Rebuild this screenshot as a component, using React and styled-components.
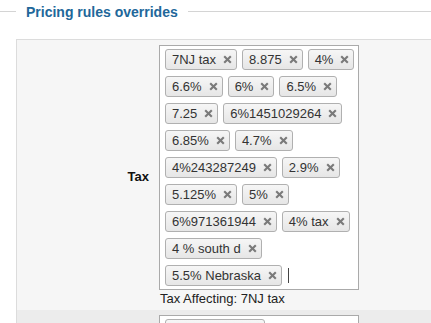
import React from "react";
import styled, { createGlobalStyle } from "styled-components";

const GlobalStyle = createGlobalStyle`
  body {
    margin: 0;
    background: #fff;
    font-family: "Liberation Sans", Arial, sans-serif;
  }
`;

const taxes = [
  "7NJ tax",
  "8.875",
  "4%",
  "6.6%",
  "6%",
  "6.5%",
  "7.25",
  "6%1451029264",
  "6.85%",
  "4.7%",
  "4%243287249",
  "2.9%",
  "5.125%",
  "5%",
  "6%971361944",
  "4% tax",
  "4 % south d",
  "5.5% Nebraska",
];

export default function App() {
  return (
    <>
      <GlobalStyle />
      <Section>
        <LegendRow>
          <Rule $w="16px" />
          <Legend>Pricing rules overrides</Legend>
          <Rule />
        </LegendRow>
        <Panel>
          <Row>
            <Label>Tax</Label>
            <Field>
              <ChoiceBox>
                {taxes.map((t) => (
                  <Tag key={t}>
                    {t}
                    <CloseIcon />
                  </Tag>
                ))}
                <Caret />
              </ChoiceBox>
              <Hint>Tax Affecting: 7NJ tax</Hint>
            </Field>
          </Row>
          <Row $alt>
            <Label />
            <Field>
              <ChoiceBox>
                <Tag $blank />
              </ChoiceBox>
            </Field>
          </Row>
        </Panel>
      </Section>
    </>
  );
}

function CloseIcon() {
  return (
    <svg width="9" height="9" viewBox="0 0 9 9">
      <path
        d="M1.2 1.2 L7.8 7.8 M7.8 1.2 L1.2 7.8"
        stroke="#7a7a7a"
        strokeWidth="2.1"
      />
    </svg>
  );
}

const Section = styled.div`
  width: 100%;
`;

const LegendRow = styled.div`
  display: flex;
  align-items: center;
  gap: 10px;
  height: 23px;
`;

const Rule = styled.div`
  height: 1px;
  background: #d4d4d4;
  width: ${(p) => p.$w || "auto"};
  flex: ${(p) => (p.$w ? "none" : "1")};
`;

const Legend = styled.span`
  font-size: 14px;
  font-weight: bold;
  color: #21679a;
  line-height: 18px;
`;

const Panel = styled.div`
  margin: 16px 0 0 16px;
  border-top: 1px solid #dcdcdc;
  border-left: 1px solid #dcdcdc;
`;

const Row = styled.div`
  display: flex;
  align-items: center;
  padding: 5px 0 3px;
  background: ${(p) => (p.$alt ? "#ececec" : "#f6f6f6")};
`;

const Label = styled.div`
  width: 132px;
  padding-right: 10px;
  text-align: right;
  font-size: 13px;
  font-weight: bold;
  color: #111;
`;

const Field = styled.div`
  display: flex;
  flex-direction: column;
`;

const ChoiceBox = styled.div`
  width: 198px;
  border: 1px solid #aaa;
  background: #fff;
  display: flex;
  flex-wrap: wrap;
  align-items: center;
  align-content: flex-start;
`;

const Tag = styled.div`
  box-sizing: border-box;
  height: 21px;
  min-width: ${(p) => (p.$blank ? "100px" : "0")};
  margin: 3px 0 3px 5px;
  padding: 0 4px 0 6px;
  display: inline-flex;
  align-items: center;
  gap: 7px;
  border: 1px solid #b0b0b0;
  border-radius: 3px;
  background: linear-gradient(#f6f6f6, #e6e6e6);
  color: #333;
  font-size: 13px;
  white-space: nowrap;
`;

const Caret = styled.span`
  width: 1px;
  height: 15px;
  margin-left: 6px;
  background: #444;
`;

const Hint = styled.div`
  font-size: 13px;
  line-height: 17px;
  color: #222;
  padding-left: 1px;
`;
